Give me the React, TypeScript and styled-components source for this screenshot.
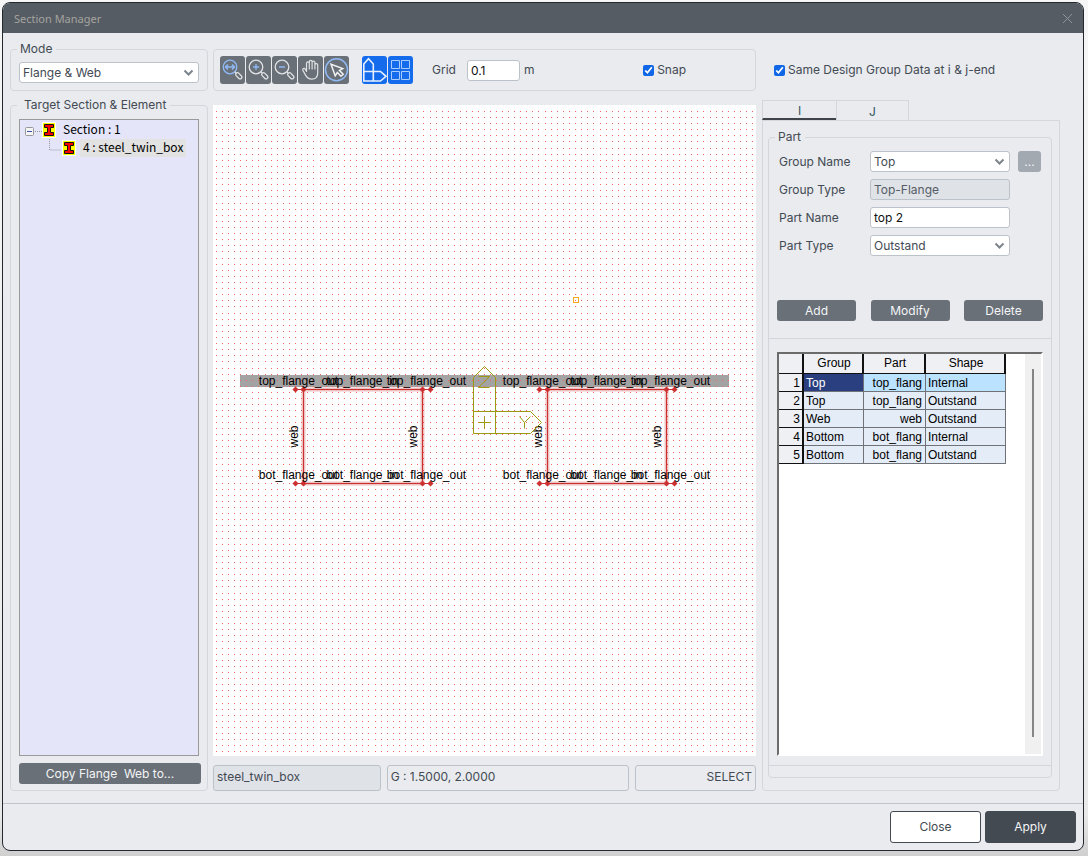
import React from "react";
import styled, { createGlobalStyle } from "styled-components";

const ui = `Inter, "Liberation Sans", sans-serif`;
const arial = `"Liberation Sans", Arial, sans-serif`;

const GlobalStyle = createGlobalStyle`
  *, *::before, *::after { box-sizing: border-box; }
  body {
    margin: 0;
    background: linear-gradient(#f6f6f6, #e9e9e9 95%, #cfcfcf);
    font: 12px/14px ${ui};
    color: #434a54;
  }
  button, input, select { font: inherit; color: inherit; margin: 0; }
`;

const Page = styled.div`
  min-height: 100vh;
  padding: 2px 4px 5px 2px;
  display: flex;
`;

const Window = styled.div`
  flex: 1;
  min-width: 0;
  display: flex;
  flex-direction: column;
  border: 1px solid #23282e;
  border-radius: 8px;
  background: #e9ebee;
  overflow: hidden;
`;

const TitleBar = styled.header`
  height: 30px;
  flex: none;
  display: flex;
  align-items: center;
  justify-content: space-between;
  padding: 0 8px 0 11px;
  background: #555c64;
`;

const Title = styled.h1`
  margin: 0;
  padding-top: 2px;
  font: 400 11px/14px "Noto Sans", sans-serif;
  color: #a5a39f;
`;

const TitleClose = styled.button`
  border: 0;
  padding: 2px;
  background: none;
  display: flex;
  color: #8e949b;
`;

const Main = styled.main`
  flex: 1;
  display: flex;
  padding: 9px 23px 12px 7px;
`;

const LeftColumn = styled.section`
  width: 198px;
  flex: none;
  display: flex;
  flex-direction: column;
  gap: 7px;
  margin-right: 5px;
`;

const CenterColumn = styled.section`
  flex: 1;
  min-width: 0;
  display: flex;
  flex-direction: column;
  padding-top: 7px;
  margin-right: 6px;
`;

const RightColumn = styled.section`
  width: 298px;
  flex: none;
  display: flex;
  flex-direction: column;
  padding-top: 7px;
`;

const Group = styled.fieldset<{ $grow?: boolean; $pad: string }>`
  flex: ${(p) => (p.$grow ? 1 : "none")};
  min-width: 0;
  margin: 0;
  border: 1px solid #d3d6db;
  border-radius: 4px;
  padding: ${(p) => p.$pad};
`;

const Legend = styled.legend<{ $start: number; $indent?: boolean }>`
  margin-left: ${(p) => p.$start}px;
  padding: 0 4px 0 ${(p) => (p.$indent ? 7 : 3)}px;
  line-height: 14px;
`;

const Stack = styled.div`
  height: 100%;
  display: flex;
  flex-direction: column;
`;

const SelectBox = styled.div<{ $width?: string }>`
  position: relative;
  width: ${(p) => p.$width ?? "100%"};
  height: 21px;

  svg {
    position: absolute;
    right: 5px;
    top: 7px;
    pointer-events: none;
  }
`;

const NativeSelect = styled.select`
  appearance: none;
  width: 100%;
  height: 21px;
  padding: 0 20px 0 3px;
  border: 1px solid #bcc2c9;
  border-radius: 3px;
  background: #fff;
  line-height: 19px;
`;

const TextInput = styled.input<{ $width: string; $disabled?: boolean }>`
  width: ${(p) => p.$width};
  height: 21px;
  padding: 0 3px;
  border: 1px solid #bcc2c9;
  border-radius: 3px;
  background: ${(p) => (p.$disabled ? "#dfe2e7" : "#fff")};
  color: ${(p) => (p.$disabled ? "#555c66" : "#111")};
`;

const Button = styled.button<{ $width?: string; $muted?: boolean }>`
  width: ${(p) => p.$width ?? "auto"};
  height: 21px;
  flex: none;
  padding: 0;
  border: 0;
  border-radius: 3px;
  background: ${(p) => (p.$muted ? "#a3a9b0" : "#697078")};
  color: #f4f5f6;
  line-height: 20px;
  white-space: pre;
`;

const Tree = styled.ul`
  flex: 1;
  width: 180px;
  margin: 0 0 7px;
  padding: 1px 5px;
  border: 1px solid #9a9a9a;
  background: #e5e5fa;
  list-style: none;
  font: 12px/18px "Noto Sans CJK KR", sans-serif;
  color: #000;
`;

const TreeNode = styled.li<{ $child?: boolean }>`
  display: flex;
  align-items: center;
  height: 18px;
  padding-left: ${(p) => (p.$child ? 24 : 0)}px;
`;

const TreeText = styled.span<{ $selected?: boolean }>`
  height: 18px;
  margin-left: 4px;
  padding: 0 3px;
  background: ${(p) => (p.$selected ? "#e2e2e2" : "transparent")};
  line-height: 16px;
`;

const Toolbar = styled.div`
  height: 42px;
  flex: none;
  display: flex;
  align-items: center;
  padding: 0 69px 0 6px;
  border: 1px solid #d3d6db;
  border-radius: 4px;
  margin-bottom: 14px;
`;

const ToolGroup = styled.div`
  display: flex;
  gap: 1px;
  margin-right: 13px;
`;

const ToolButton = styled.button<{ $active?: boolean }>`
  width: 25px;
  height: 28px;
  padding: 0;
  border: 0;
  border-radius: 3px;
  background: ${(p) => (p.$active ? "#146bec" : "#6a7077")};

  svg { display: block; }
`;

const GridLabel = styled.label`
  display: flex;
  align-items: center;
  gap: 11px;
  margin-left: 6px;
`;

const Unit = styled.span`
  margin-left: 4px;
`;

const CheckLabel = styled.label<{ $end?: boolean }>`
  display: flex;
  align-items: center;
  gap: 3px;
  margin-left: ${(p) => (p.$end ? "auto" : 0)};

  input {
    width: 11px;
    height: 11px;
    accent-color: #0f66e6;
  }
`;

const Canvas = styled.div`
  flex: 1;
  min-height: 400px;
  position: relative;
  background: #fff;
  margin-bottom: 9px;
  overflow: hidden;
`;

const Drawing = styled.svg`
  position: absolute;
  width: 100%;
  height: 100%;
  font: 12px ${arial};
`;

const StatusBar = styled.footer`
  display: flex;
  gap: 6px;
`;

const StatusField = styled.output<{ $grow: number; $filled?: boolean; $right?: boolean }>`
  flex: ${(p) => p.$grow} 1 0;
  height: 26px;
  padding: 0 3px;
  border: 1px solid #bcc2c9;
  border-radius: 3px;
  background: ${(p) => (p.$filled ? "#dfe2e7" : "transparent")};
  text-align: ${(p) => (p.$right ? "right" : "left")};
  line-height: 22px;
`;

const EndOption = styled.div`
  height: 42px;
  display: flex;
  align-items: center;
  padding-left: 12px;
  margin-bottom: 9px;
`;

const Tabs = styled.div`
  display: flex;
  height: 20px;
`;

const Tab = styled.button<{ $active?: boolean }>`
  width: ${(p) => (p.$active ? 74 : 73)}px;
  padding: 2px 0 0;
  border: 1px solid #d3d6db;
  border-right-width: ${(p) => (p.$active ? 0 : 1)}px;
  border-bottom: ${(p) => (p.$active ? "2px solid #3f444a" : "0")};
  background: none;
  line-height: 14px;
  color: #2f5560;
`;

const TabPanel = styled.div`
  flex: 1;
  display: flex;
  padding: 9px 7px 12px 5px;
  border: 1px solid #d3d6db;
  border-radius: 0 0 4px 4px;
`;

const FieldRow = styled.div`
  display: flex;
  align-items: center;
  height: 21px;
  margin: 0 9px 7px 10px;

  > label { width: 91px; }
  > button { margin-left: 8px; }
`;

const ButtonRow = styled.div`
  display: flex;
  justify-content: space-between;
  margin: 37px 8px 17px;
`;

const ListBox = styled.div`
  flex: 1;
  display: flex;
  border: solid #d3d6db;
  border-width: 1px 0;
  padding: 13px 8px 9px;
`;

const TableFrame = styled.div`
  flex: 1;
  display: flex;
  justify-content: space-between;
  border: 2px solid;
  border-color: #6c6c6c #fff #fff #6c6c6c;
  background: #fff;
`;

const ScrollTrack = styled.div`
  width: 16px;
  padding: 15px 7px 17px;
  background: #f0f0f0;
`;

const ScrollThumb = styled.div`
  width: 2px;
  height: 100%;
  background: #858585;
`;

const PartTable = styled.table`
  table-layout: fixed;
  width: 227px;
  height: max-content;
  border-collapse: separate;
  border-spacing: 0;
  font: 12px/14px ${arial};
  color: #000;
`;

const HeadCell = styled.th<{ $width?: number; $row?: boolean }>`
  width: ${(p) => (p.$width ? `${p.$width}px` : "auto")};
  height: ${(p) => (p.$row ? 18 : 20)}px;
  padding: ${(p) => (p.$row ? "0 2px" : "0 0 2px 2px")};
  border: solid #111;
  border-width: 0 2px 1px 0;
  background: #eff0f4;
  font-weight: 400;
  text-align: ${(p) => (p.$row ? "right" : "center")};
`;

const Cell = styled.td<{ $tone?: "cursor" | "row"; $right?: boolean }>`
  height: 18px;
  padding: 0 3px 0 2px;
  border: solid #6f7276;
  border-width: 0 1px 1px 0;
  background: ${(p) => (p.$tone === "cursor" ? "#2a3f80" : p.$tone === "row" ? "#bbe2ff" : "#e4ecf7")};
  color: ${(p) => (p.$tone === "cursor" ? "#fff" : "#000")};
  text-align: ${(p) => (p.$right ? "right" : "left")};
  white-space: nowrap;
`;

const ActionBar = styled.footer`
  height: 47px;
  flex: none;
  display: flex;
  justify-content: flex-end;
  gap: 4px;
  padding: 7px 7px 0;
  border-top: 1px solid #c1c5cb;
`;

const ActionButton = styled.button<{ $primary?: boolean }>`
  width: 91px;
  height: 32px;
  padding: 0;
  border: 1px solid #434a52;
  border-radius: 3px;
  background: ${(p) => (p.$primary ? "#434a52" : "#fff")};
  color: ${(p) => (p.$primary ? "#f4f5f6" : "#434a52")};
`;

function Select({ id, label, value, width }: { id?: string; label?: string; value: string; width?: string }) {
  return (
    <SelectBox $width={width}>
      <NativeSelect id={id} aria-label={label} defaultValue={value}>
        <option>{value}</option>
      </NativeSelect>
      <svg width="11" height="8" viewBox="0 0 11 8" fill="none" stroke="#7c848d" strokeWidth="2">
        <path d="M1.5 1.5 5.5 5.5 9.5 1.5" />
      </svg>
    </SelectBox>
  );
}

const light = "#dfe2e5";
const blue = "#8fb9f5";

function Magnifier({ tone = light, children }: { tone?: string; children: React.ReactNode }) {
  return (
    <svg width="25" height="28" viewBox="0 0 25 28" fill="none" strokeWidth="1.3">
      <circle cx="10" cy="11" r="6.8" stroke={tone} />
      <path d="m14.8 15.8 1.6 1.6" stroke={light} />
      <rect x="-1.8" y="-3.6" width="3.6" height="7.2" rx="1.6" transform="translate(18.8 19.8) rotate(-45)" stroke={light} />
      {children}
    </svg>
  );
}

const tools = [
  {
    name: "Zoom fit",
    icon: (
      <Magnifier tone={blue}>
        <path d="M5.5 11h9M8 8.5 5.5 11 8 13.5M12 8.5l2.5 2.5-2.5 2.5" stroke={blue} strokeWidth="1.6" />
      </Magnifier>
    ),
  },
  { name: "Zoom in", icon: <Magnifier><path d="M7 11h6M10 8v6" stroke={blue} /></Magnifier> },
  { name: "Zoom out", icon: <Magnifier><path d="M7 11h6" stroke={blue} /></Magnifier> },
  {
    name: "Pan",
    icon: (
      <svg width="25" height="28" viewBox="0 0 25 28" fill="none" stroke={light} strokeWidth="1.2" strokeLinejoin="round" strokeLinecap="round">
        <path d="M8.5 15.5V7.2a1.4 1.4 0 0 1 2.8 0V13M11.3 12.5V5.7a1.4 1.4 0 0 1 2.8 0V13M14.1 12.5V6.5a1.4 1.4 0 0 1 2.8 0V13M16.9 13V9a1.4 1.4 0 0 1 2.8 0v8c0 3.8-2.4 6.2-6 6.2-3.2 0-4.7-1.4-6-3.8l-3-5.4c-.4-1.2 1.4-2.2 2.4-1l1.4 2.2" />
      </svg>
    ),
  },
  {
    name: "Select",
    icon: (
      <svg width="25" height="28" viewBox="0 0 25 28" fill="none" stroke="#eef0f2" strokeWidth="1.5">
        <circle cx="12.5" cy="13.8" r="11" stroke={blue} />
        <path d="M7 8.2 18.8 12.6 15.4 14.4 19.2 18.2 17 20.2 13.3 16.5 11.2 19.8Z" />
      </svg>
    ),
  },
];

const viewTools = [
  {
    name: "Local axis",
    icon: (
      <svg width="25" height="28" viewBox="0 0 25 28" fill="none" stroke="#e6f0ff" strokeWidth="1.6">
        <path d="M1.8 25V8L6.5 2.8 11.3 8v17M1.8 15.5H18.5l5.5 4.8L18.5 25H1.8Z" />
      </svg>
    ),
  },
  {
    name: "Grid",
    icon: (
      <svg width="25" height="28" viewBox="0 0 25 28" fill="none" stroke="#a9ccff" strokeWidth="1">
        <path d="M3.5 4.5h8v8h-8zM13.5 4.5h8v8h-8zM3.5 15.5h8v8h-8zM13.5 15.5h8v8h-8z" />
      </svg>
    ),
  },
];

const STEP = 6.109;
const axisOffsets = (min: number, max: number) => {
  const list: number[] = [];
  for (let k = Math.ceil(min / STEP); k * STEP < max; k++) list.push(Math.trunc(k * STEP));
  return list;
};
const gridPath = axisOffsets(-317, 334)
  .map((y) => axisOffsets(-271, 272).map((x) => `M${x} ${y}h1v1h-1z`).join(""))
  .join("");

function SectionBox({ x }: { x: number }) {
  return (
    <g transform={`translate(${x} -33)`}>
      <path d="M0 0H119V94H0Z" fill="none" stroke="#c83232" strokeOpacity="0.3" strokeWidth="4" />
      <path d="M-8 0H127M-8 94H127M0 0V94M119 0V94" stroke="#cc3030" strokeWidth="1" />
      {[0, 94].map((y) =>
        [-8, 0, 119, 127].map((dx) => (
          <path key={`${dx}-${y}`} d={`M${dx - 2} ${y}l2-2 2 2-2 2z`} fill="#cc3030" stroke="#cc3030" strokeWidth="1.5" />
        )),
      )}
      <g textAnchor="middle" fill="#000">
        <text x="-5" y="-5">top_flange_out</text>
        <text x="59" y="-5">top_flange_in</text>
        <text x="123" y="-5">top_flange_out</text>
        <text x="-5" y="89">bot_flange_out</text>
        <text x="59" y="89">bot_flange_in</text>
        <text x="123" y="89">bot_flange_out</text>
        <text transform="translate(-6 47) rotate(-90)">web</text>
        <text transform="translate(113 47) rotate(-90)">web</text>
      </g>
    </g>
  );
}

function SectionDrawing() {
  return (
    <Drawing role="img" aria-label="Twin box section">
      <g transform="translate(271 317)">
        <rect x="-244" y="-47" width="489" height="12" fill="#a3a3a3" />
        <path d={gridPath} fill="#f26464" shapeRendering="crispEdges" />
        <g transform="translate(.5 .5)">
          <SectionBox x={-181} />
          <SectionBox x={63} />
          <path
            d="M-11 11V-45L0-56 11-45V11M-11 11H46L57 0 46-11H-11M-6-46H5L-6-35H5M-6 0H6M0-6V6M35-6 40 0 46-6M40 0V6"
            fill="none"
            stroke="#9c9a10"
          />
          <rect x="89" y="-125" width="5" height="5" fill="none" stroke="#f5a81c" />
        </g>
      </g>
    </Drawing>
  );
}

function BeamIcon() {
  return (
    <svg width="14" height="16" viewBox="0 0 14 16">
      <rect width="14" height="16" fill="#fff" />
      <rect x="1" y="1" width="12" height="14" fill="#ffff00" />
      <path d="M2.5 2.5h9v3h-3v5h3v3h-9v-3h3v-5h-3z" fill="#f00" stroke="#111" />
    </svg>
  );
}

const parts = [
  ["Top", "top_flang", "Internal"],
  ["Top", "top_flang", "Outstand"],
  ["Web", "web", "Outstand"],
  ["Bottom", "bot_flang", "Internal"],
  ["Bottom", "bot_flang", "Outstand"],
];

export default function App() {
  return (
    <Page>
      <GlobalStyle />
      <Window>
        <TitleBar>
          <Title>Section Manager</Title>
          <TitleClose aria-label="Close window">
            <svg width="11" height="11" viewBox="0 0 11 11" stroke="currentColor">
              <path d="m1 1 9 9M10 1l-9 9" />
            </svg>
          </TitleClose>
        </TitleBar>

        <Main>
          <LeftColumn>
            <Group $pad="6px 8px 7px">
              <Legend $start={-2}>Mode</Legend>
              <Select label="Mode" value="Flange &amp; Web" />
            </Group>
            <Group $grow $pad="7px 6px 6px 8px">
              <Legend $start={-2} $indent>Target Section &amp; Element</Legend>
              <Stack>
                <Tree>
                  <TreeNode>
                    <svg width="17" height="16" viewBox="0 0 17 16" fill="none">
                      <rect x=".5" y="5.5" width="8" height="8" rx="1" fill="#f4f4f4" stroke="#989898" />
                      <path d="M2 9.5h5" stroke="#3c55a5" />
                      <path d="M10 9.5h7" stroke="#999" strokeDasharray="1 1" />
                    </svg>
                    <BeamIcon />
                    <TreeText>Section : 1</TreeText>
                  </TreeNode>
                  <TreeNode $child>
                    <svg width="13" height="18" viewBox="0 0 13 18" fill="none" stroke="#999" strokeDasharray="1 1">
                      <path d="M.5 0v11H12" />
                    </svg>
                    <BeamIcon />
                    <TreeText $selected>4 : steel_twin_box</TreeText>
                  </TreeNode>
                </Tree>
                <Button>{"Copy Flange  Web to..."}</Button>
              </Stack>
            </Group>
          </LeftColumn>

          <CenterColumn>
            <Toolbar>
              <ToolGroup>
                {tools.map((t) => (
                  <ToolButton key={t.name} aria-label={t.name}>{t.icon}</ToolButton>
                ))}
              </ToolGroup>
              <ToolGroup>
                {viewTools.map((t) => (
                  <ToolButton key={t.name} $active aria-label={t.name}>{t.icon}</ToolButton>
                ))}
              </ToolGroup>
              <GridLabel>
                Grid
                <TextInput $width="53px" defaultValue="0.1" />
              </GridLabel>
              <Unit>m</Unit>
              <CheckLabel $end>
                <input type="checkbox" defaultChecked />
                Snap
              </CheckLabel>
            </Toolbar>
            <Canvas>
              <SectionDrawing />
            </Canvas>
            <StatusBar>
              <StatusField $grow={160} $filled>steel_twin_box</StatusField>
              <StatusField $grow={235}>G : 1.5000, 2.0000</StatusField>
              <StatusField $grow={113} $right>SELECT</StatusField>
            </StatusBar>
          </CenterColumn>

          <RightColumn>
            <EndOption>
              <CheckLabel>
                <input type="checkbox" defaultChecked />
                Same Design Group Data at i &amp; j-end
              </CheckLabel>
            </EndOption>
            <Tabs role="tablist">
              <Tab role="tab" aria-selected $active>I</Tab>
              <Tab role="tab" aria-selected={false}>J</Tab>
            </Tabs>
            <TabPanel role="tabpanel">
              <Group $grow $pad="7px 0 11px">
                <Legend $start={6}>Part</Legend>
                <Stack>
                  <FieldRow>
                    <label htmlFor="group-name">Group Name</label>
                    <Select id="group-name" value="Top" width="140px" />
                    <Button $width="23px" $muted>...</Button>
                  </FieldRow>
                  <FieldRow>
                    <label htmlFor="group-type">Group Type</label>
                    <TextInput id="group-type" $width="140px" $disabled readOnly value="Top-Flange" />
                  </FieldRow>
                  <FieldRow>
                    <label htmlFor="part-name">Part Name</label>
                    <TextInput id="part-name" $width="140px" defaultValue="top 2" />
                  </FieldRow>
                  <FieldRow>
                    <label htmlFor="part-type">Part Type</label>
                    <Select id="part-type" value="Outstand" width="140px" />
                  </FieldRow>
                  <ButtonRow>
                    <Button $width="79px">Add</Button>
                    <Button $width="79px">Modify</Button>
                    <Button $width="79px">Delete</Button>
                  </ButtonRow>
                  <ListBox>
                    <TableFrame>
                      <PartTable>
                        <thead>
                          <tr>
                            <HeadCell $width={25} aria-label="Row" />
                            <HeadCell $width={60}>Group</HeadCell>
                            <HeadCell $width={62}>Part</HeadCell>
                            <HeadCell>Shape</HeadCell>
                          </tr>
                        </thead>
                        <tbody>
                          {parts.map(([group, part, shape], i) => (
                            <tr key={i}>
                              <HeadCell $row scope="row">{i + 1}</HeadCell>
                              <Cell $tone={i === 0 ? "cursor" : undefined}>{group}</Cell>
                              <Cell $right $tone={i === 0 ? "row" : undefined}>{part}</Cell>
                              <Cell $tone={i === 0 ? "row" : undefined}>{shape}</Cell>
                            </tr>
                          ))}
                        </tbody>
                      </PartTable>
                      <ScrollTrack>
                        <ScrollThumb />
                      </ScrollTrack>
                    </TableFrame>
                  </ListBox>
                </Stack>
              </Group>
            </TabPanel>
          </RightColumn>
        </Main>

        <ActionBar>
          <ActionButton>Close</ActionButton>
          <ActionButton $primary>Apply</ActionButton>
        </ActionBar>
      </Window>
    </Page>
  );
}
